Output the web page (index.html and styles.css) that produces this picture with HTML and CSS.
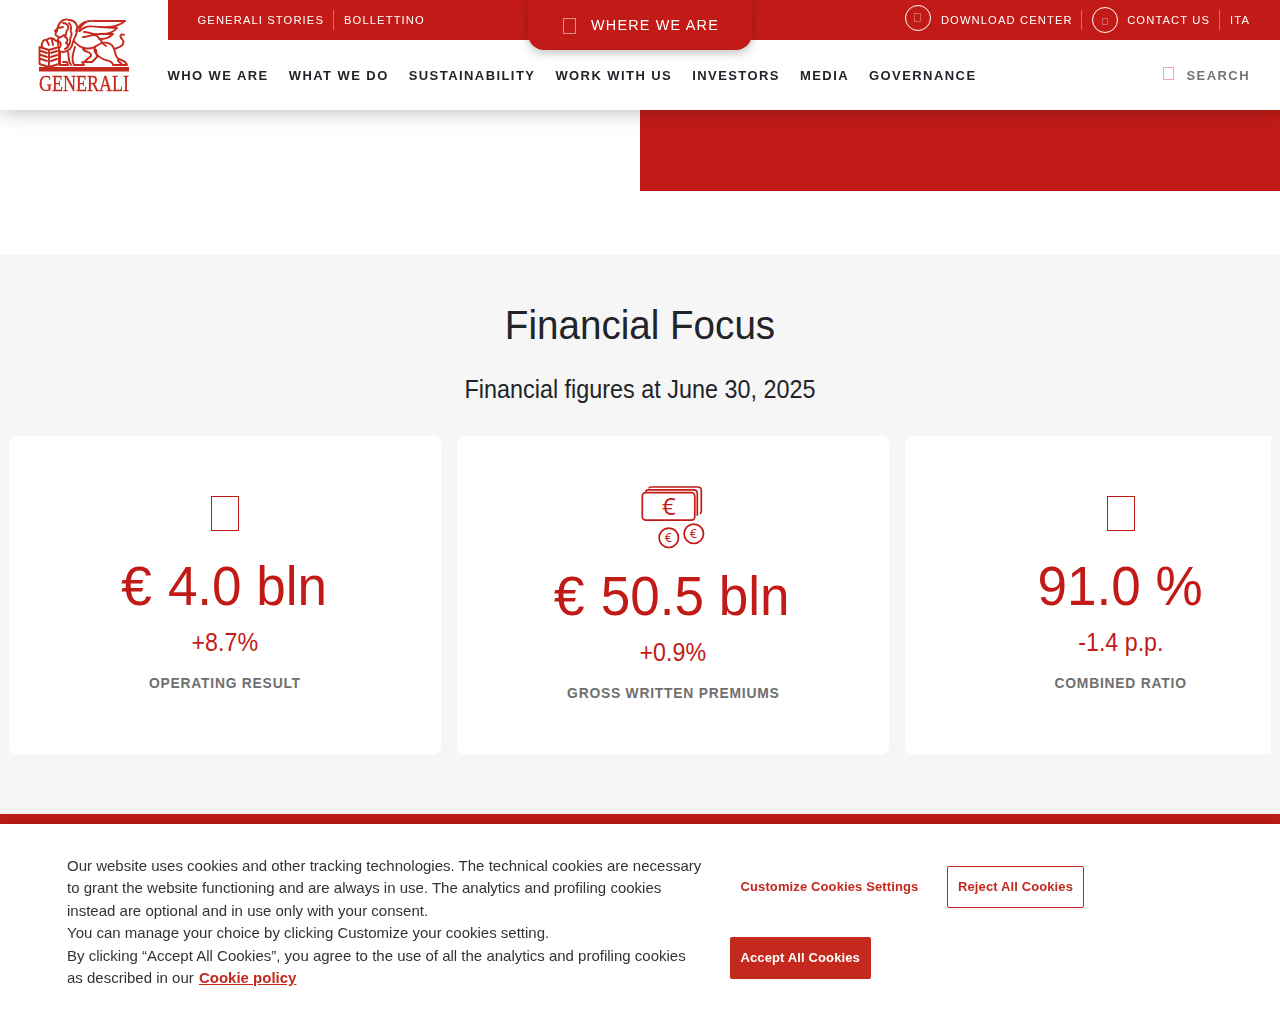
FILE: index.html
```html
<!DOCTYPE html>
<html lang="en">
<head>
<meta charset="utf-8">
<title>Generali Group</title>
<link rel="stylesheet" href="styles.css">
</head>
<body>
<header class="header">
  <a class="logo" aria-label="Generali">
    <svg width="125" height="84" viewBox="0 0 125 84" fill="none" stroke="#c5281c" stroke-width="1.9" stroke-linejoin="round" stroke-linecap="round">
      <path d="M1.500 29l9.500 3 10-3v17l-10 3-9.500-3zM11 32v16M3 33l6 2M3 37l6 2M3 41l6 2M13 35l6-2M13 39l6-2M13 43l6-2"/>
      <path d="M4 29c-1-5 2-8 5-7 2-3 7-2 9 1 3-1 6 2 4 6M9 23l2 4M14 22l1 5"/>
      <path d="M19 18c-2-1-2-3 0-5l1-5c2-5 7-8 11-6 6 0 9 5 8 10 0 5-3 8-4 12-1 6-5 10-11 10M19 18c2 2 5 1 7-1M20 10l5-1M25 5c4 0 6 3 5 6-3 2-1 5-3 8 3 1 3 4 1 6 3 1 2 5-1 6M31 5c4 3 1 6 2 9 2 3-1 5-1 8 1 3-1 5-3 8M17 13l3-3M21 20c-3 2 0 4-1 7M22 33v14h8l-1-3h-4"/>
      <path d="M38 13C44 1 53 3 61 3h26c-6 5-12 6-18 6M42 13c6-7 13-4 20-4l17 1c-4 5-10 6-15 6M46 14c6 0 8 3 16 2h13c-5 5-9 5-14 5M45 19c6 0 10-4 14-1 4 3 5 8 9 10M50 3c-4 2-8 6-9 10"/>
      <path d="M36 23c6 8 16 10 24 4 5-4 14-3 16 4 2 5 1 9 7 11 3 1 5 2 6 5H75c0-4-6-4-10-6M76 31c7-2 12-5 8-10-3-3-1-6 2-4M58 28c-4 5 1 10 7 13M45 31c2 4 9 2 8 7l-7 6h8l5-5-1-7M37 29c-2 7-4 12-1 18h10l-2-3M30 34c1 5 0 9 3 13M80 42c-1 2 3 2 4 5"/>
      <path d="M1 51.300h90" stroke-width="4.600" stroke-linecap="butt"/>
      <text class="logo-word" x="1" y="73.300" textLength="90" lengthAdjust="spacingAndGlyphs">GENERALI</text>
    </svg>
  </a>
  <div class="header-main">
    <div class="topbar">
      <div class="links"><a class="link">GENERALI STORIES</a><a class="link">BOLLETTINO</a></div>
      <div class="links"><a class="link tool tool-first"><i class="ring"><i class="box box-a"></i></i>DOWNLOAD CENTER</a><a class="link tool"><i class="ring ring-low"><i class="box box-b"></i></i>CONTACT US</a><a class="link">ITA</a></div>
    </div>
    <nav class="nav">
      <a>WHO WE ARE</a><a>WHAT WE DO</a><a>SUSTAINABILITY</a><a>WORK WITH US</a><a>INVESTORS</a><a>MEDIA</a><a>GOVERNANCE</a>
      <a class="search"><i class="box box-c"></i>SEARCH</a>
    </nav>
  </div>
  <a class="where"><i class="box box-d"></i>WHERE WE ARE</a>
</header>
<main>
  <section class="hero"><div class="hero-panel"></div></section>
  <section class="focus">
    <h2>Financial Focus</h2>
    <h3>Financial figures at June 30, 2025</h3>
    <div class="cards">
      <article class="card"><i class="glyph"></i><div class="figure"><span class="euro">€</span> 4.0 bln</div><div class="delta">+8.7%</div><div class="label">OPERATING RESULT</div></article>
      <article class="card">
        <svg class="money" width="64" height="64" viewBox="0.200 1.200 64 64" fill="none" stroke="#c21b17" stroke-width="1.7">
          <rect x="1.500" y="7.800" width="52.500" height="27.500" rx="3.500"/>
          <path d="M5 7c0-1.500 1-2 2.500-2H53c2.500 0 3.500 1 3.500 3.500V31M8 3.500c.5-1 1-1.300 2-1.300H57c2.500 0 3.500 1 3.500 3.500V27c0 1-.5 1.500-1.500 2"/>
          <circle cx="28" cy="53" r="9.700"/><circle cx="53" cy="49" r="9.700"/>
          <g class="money-sign"><text x="28" y="30.500" font-size="24">€</text><text x="27.500" y="57.500" font-size="12.500">€</text><text x="52.500" y="53.500" font-size="12.500">€</text></g>
        </svg>
        <div class="figure"><span class="euro">€</span> 50.5 bln</div><div class="delta">+0.9%</div><div class="label">GROSS WRITTEN PREMIUMS</div></article>
      <article class="card"><i class="glyph"></i><div class="figure">91.0 %</div><div class="delta">-1.4 p.p.</div><div class="label">COMBINED RATIO</div></article>
    </div>
  </section>
  <section class="band"></section>
</main>
<aside class="cookies">
  <p>Our website uses cookies and other tracking technologies. The technical cookies are necessary<br>to grant the website functioning and are always in use. The analytics and profiling cookies<br>instead are optional and in use only with your consent.<br>You can manage your choice by clicking Customize your cookies setting.<br>By clicking “Accept All Cookies”, you agree to the use of all the analytics and profiling cookies<br>as described in our <a>Cookie policy</a></p>
  <div class="actions"><button class="btn plain">Customize Cookies Settings</button><button class="btn outline">Reject All Cookies</button><button class="btn solid">Accept All Cookies</button></div>
</aside>
</body>
</html>
```
FILE: styles.css
```css
* { box-sizing: border-box; }
body { margin: 0; height: 1024px; overflow: hidden; font-family: "Liberation Sans", Arial, sans-serif; color: #212529; background: #fff; }
.header { position: fixed; z-index: 5; top: 0; left: 0; width: 1280px; height: 110px; display: flex; background: #fff; box-shadow: 0 0 20px rgba(0,0,0,.3); }
.logo { width: 167.5px; padding: 18px 0 0 38px; }
.logo-word { font: 23px "Liberation Serif", serif; fill: #c5281c; stroke: #c5281c; stroke-width: .35px; }
.header-main { flex: 1; }
.topbar { height: 40px; background: #c21b17; color: #fff; display: flex; justify-content: space-between; align-items: center; padding: 0 21px 0 20px; }
.links { display: flex; align-items: center; height: 20px; }
.link { font-size: 11.2px; letter-spacing: 1.12px; line-height: 20px; height: 20px; padding: 0 9px 0 10px; border-right: 1px solid rgba(255,255,255,.35); white-space: nowrap; }
.link:last-child { border-right: 0; }
.tool { display: flex; }
.tool-first { padding-right: 8px; }
.box { display: block; border: 1px solid; flex: none; }
.ring { width: 26px; height: 26px; border: 1px solid #fff; border-radius: 50%; margin: -5px 9.500px 0 0; }
.ring-low { margin-top: -3.5px; }
.box-a { width: 7px; height: 9px; margin: 7px 0 0 8px; opacity: .3; }
.box-b { width: 6px; height: 7px; margin: 10px 0 0 9px; opacity: .3; }
.box-c { width: 11px; height: 13px; color: #efa9a7; margin: 0 12.5px 4px 0; }
.box-d { width: 13px; height: 16px; opacity: .5; margin: 2px 15px 0 0; }
.nav { height: 70px; display: flex; align-items: center; gap: 20px; padding-right: 30px; font-weight: 700; font-size: 13px; letter-spacing: 1.43px; white-space: nowrap; }
.search { margin-left: auto; display: flex; align-items: center; color: #757575; }
.where { position: absolute; left: 528px; top: 0; width: 224px; height: 50px; padding-left: 35px; background: #c21b17; color: #fff; border-radius: 0 0 16px 16px; box-shadow: 0 3px 10px rgba(0,0,0,.25); display: flex; align-items: center; font-size: 14.4px; letter-spacing: 1.2px; }
.hero { height: 255px; }
.hero-panel { margin-left: 50%; height: 191.4px; background: #c21b17; }
.focus { height: 559px; background: #f6f6f6; padding: 46px 9px 0; text-align: center; }
h2 { margin: 0; font-weight: 400; font-size: 40.5px; line-height: 48px; transform: scaleX(.953); }
h3 { margin: 25px 0 0; font-weight: 400; font-size: 25px; line-height: 30px; transform: scaleX(.935); }
.cards { margin-top: 32px; display: flex; gap: 16px; overflow: hidden; }
.card { flex: 0 0 432px; height: 318px; background: #fff; border-radius: 8px; display: flex; flex-direction: column; align-items: center; padding-top: 50px; color: #c21b17; }
.glyph { width: 28px; height: 35px; border: 1px solid #c21b17; margin: 10px 1px 9px 0; }
.figure { font-size: 56px; line-height: 66px; margin: 13px 2px 0 0; white-space: nowrap; transform: scaleX(.947); }
.euro { display: inline-block; margin-right: 2px; transform: scaleX(1.05); }
.money-sign { font-family: "Open Sans", sans-serif; fill: #c21b17; stroke: none; text-anchor: middle; }
.delta { font-size: 25px; line-height: 30px; margin-top: 8px; transform: scaleX(.93); }
.label { font-size: 14.4px; line-height: 20px; font-weight: 700; margin-top: 16px; letter-spacing: .8px; color: #6f6f6f; transform: scaleX(.963); }
.band { height: 210px; background: #c21b17; }
.cookies { position: fixed; z-index: 6; left: 0; bottom: 0; width: 1280px; height: 200px; background: #fff; box-shadow: 0 0 18px rgba(0,0,0,.2); padding: 31px 67px; display: flex; }
.cookies p { margin: 0; width: 662.5px; font-size: 15px; line-height: 22.4px; color: #333; white-space: nowrap; }
.cookies a { margin-left: 1px; color: #c5281c; font-weight: 700; text-decoration: underline; }
.actions { padding-top: 11px; width: 400px; display: flex; flex-wrap: wrap; align-content: flex-start; row-gap: 29.5px; }
.btn { height: 41.500px; border: 1px solid transparent; border-radius: 2px; padding: 0 10px; font: 700 13px "Liberation Sans", Arial, sans-serif; letter-spacing: .12px; color: #c5281c; background: #fff; }
.outline { margin-left: 17.5px; border-color: #c5281c; }
.solid { color: #fff; background: #c5281c; }
```
